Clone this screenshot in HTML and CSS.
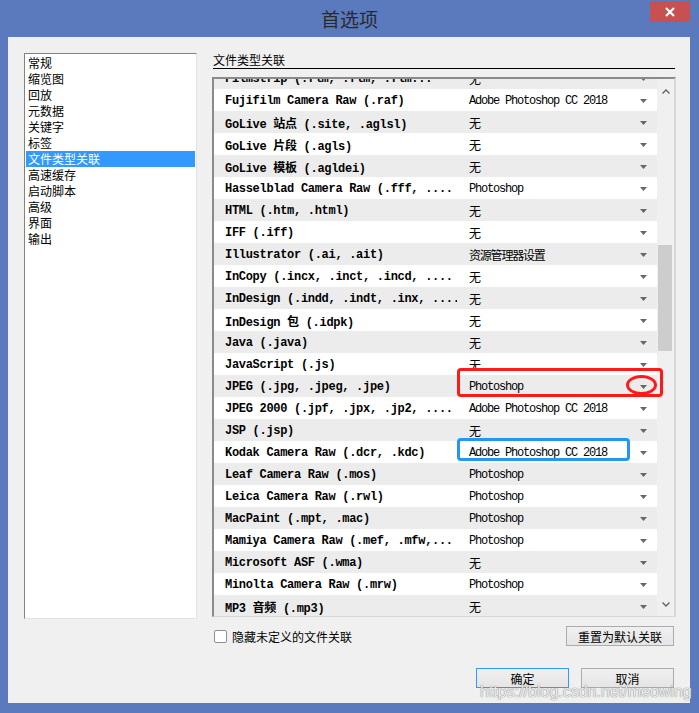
FILE: index.html
```html
<!DOCTYPE html>
<html lang="zh-CN">

<head>
    <meta charset="UTF-8">
    <meta name="viewport" content="width=device-width, initial-scale=1.0">
    <title>首选项</title>
    <link rel="stylesheet" href="styles.css">
</head>

<body>
    <div class="window">
        <div class="titlebar">
            <span class="title">首选项</span>
            <button class="close-btn" aria-label="关闭">
                <svg width="10" height="10" viewBox="0 0 10 10">
                    <path d="M1 1 L9 9 M9 1 L1 9" stroke="#fff" stroke-width="2.2" />
                </svg>
            </button>
        </div>

        <div class="client">
            <div class="main">
                <ul class="nav-list">
                    <li>常规</li>
                    <li>缩览图</li>
                    <li>回放</li>
                    <li>元数据</li>
                    <li>关键字</li>
                    <li>标签</li>
                    <li class="selected">文件类型关联</li>
                    <li>高速缓存</li>
                    <li>启动脚本</li>
                    <li>高级</li>
                    <li>界面</li>
                    <li>输出</li>
                </ul>

                <div class="panel">
                    <div class="panel-header">文件类型关联</div>

                    <div class="assoc-table">
                        <div class="rows">
                            <div class="row alt partial"><span class="name">Filmstrip (.flm, .flm, .flm...</span><span class="value"><span>无</span><svg class="arrow" viewBox="0 0 7 4"><path d="M0 0 H7 L3.5 4 Z" /></svg></span></div>
                            <div class="row"><span class="name">Fujifilm Camera Raw (.raf)</span><span class="value"><span>Adobe Photoshop CC 2018</span><svg class="arrow" viewBox="0 0 7 4"><path d="M0 0 H7 L3.5 4 Z" /></svg></span></div>
                            <div class="row alt"><span class="name">GoLive 站点 (.site, .aglsl)</span><span class="value"><span>无</span><svg class="arrow" viewBox="0 0 7 4"><path d="M0 0 H7 L3.5 4 Z" /></svg></span></div>
                            <div class="row"><span class="name">GoLive 片段 (.agls)</span><span class="value"><span>无</span><svg class="arrow" viewBox="0 0 7 4"><path d="M0 0 H7 L3.5 4 Z" /></svg></span></div>
                            <div class="row alt"><span class="name">GoLive 模板 (.agldei)</span><span class="value"><span>无</span><svg class="arrow" viewBox="0 0 7 4"><path d="M0 0 H7 L3.5 4 Z" /></svg></span></div>
                            <div class="row"><span class="name">Hasselblad Camera Raw (.fff, ....</span><span class="value"><span>Photoshop</span><svg class="arrow" viewBox="0 0 7 4"><path d="M0 0 H7 L3.5 4 Z" /></svg></span></div>
                            <div class="row alt"><span class="name">HTML (.htm, .html)</span><span class="value"><span>无</span><svg class="arrow" viewBox="0 0 7 4"><path d="M0 0 H7 L3.5 4 Z" /></svg></span></div>
                            <div class="row"><span class="name">IFF (.iff)</span><span class="value"><span>无</span><svg class="arrow" viewBox="0 0 7 4"><path d="M0 0 H7 L3.5 4 Z" /></svg></span></div>
                            <div class="row alt"><span class="name">Illustrator (.ai, .ait)</span><span class="value"><span>资源管理器设置</span><svg class="arrow" viewBox="0 0 7 4"><path d="M0 0 H7 L3.5 4 Z" /></svg></span></div>
                            <div class="row"><span class="name">InCopy (.incx, .inct, .incd, ....</span><span class="value"><span>无</span><svg class="arrow" viewBox="0 0 7 4"><path d="M0 0 H7 L3.5 4 Z" /></svg></span></div>
                            <div class="row alt"><span class="name">InDesign (.indd, .indt, .inx, ....</span><span class="value"><span>无</span><svg class="arrow" viewBox="0 0 7 4"><path d="M0 0 H7 L3.5 4 Z" /></svg></span></div>
                            <div class="row"><span class="name">InDesign 包 (.idpk)</span><span class="value"><span>无</span><svg class="arrow" viewBox="0 0 7 4"><path d="M0 0 H7 L3.5 4 Z" /></svg></span></div>
                            <div class="row alt"><span class="name">Java (.java)</span><span class="value"><span>无</span><svg class="arrow" viewBox="0 0 7 4"><path d="M0 0 H7 L3.5 4 Z" /></svg></span></div>
                            <div class="row"><span class="name">JavaScript (.js)</span><span class="value"><span>无</span><svg class="arrow" viewBox="0 0 7 4"><path d="M0 0 H7 L3.5 4 Z" /></svg></span></div>
                            <div class="row alt"><span class="name">JPEG (.jpg, .jpeg, .jpe)</span><span class="value"><span>Photoshop</span><svg class="arrow" viewBox="0 0 7 4"><path d="M0 0 H7 L3.5 4 Z" /></svg></span></div>
                            <div class="row"><span class="name">JPEG 2000 (.jpf, .jpx, .jp2, ....</span><span class="value"><span>Adobe Photoshop CC 2018</span><svg class="arrow" viewBox="0 0 7 4"><path d="M0 0 H7 L3.5 4 Z" /></svg></span></div>
                            <div class="row alt"><span class="name">JSP (.jsp)</span><span class="value"><span>无</span><svg class="arrow" viewBox="0 0 7 4"><path d="M0 0 H7 L3.5 4 Z" /></svg></span></div>
                            <div class="row"><span class="name">Kodak Camera Raw (.dcr, .kdc)</span><span class="value"><span>Adobe Photoshop CC 2018</span><svg class="arrow" viewBox="0 0 7 4"><path d="M0 0 H7 L3.5 4 Z" /></svg></span></div>
                            <div class="row alt"><span class="name">Leaf Camera Raw (.mos)</span><span class="value"><span>Photoshop</span><svg class="arrow" viewBox="0 0 7 4"><path d="M0 0 H7 L3.5 4 Z" /></svg></span></div>
                            <div class="row"><span class="name">Leica Camera Raw (.rwl)</span><span class="value"><span>Photoshop</span><svg class="arrow" viewBox="0 0 7 4"><path d="M0 0 H7 L3.5 4 Z" /></svg></span></div>
                            <div class="row alt"><span class="name">MacPaint (.mpt, .mac)</span><span class="value"><span>Photoshop</span><svg class="arrow" viewBox="0 0 7 4"><path d="M0 0 H7 L3.5 4 Z" /></svg></span></div>
                            <div class="row"><span class="name">Mamiya Camera Raw (.mef, .mfw,...</span><span class="value"><span>Photoshop</span><svg class="arrow" viewBox="0 0 7 4"><path d="M0 0 H7 L3.5 4 Z" /></svg></span></div>
                            <div class="row alt"><span class="name">Microsoft ASF (.wma)</span><span class="value"><span>无</span><svg class="arrow" viewBox="0 0 7 4"><path d="M0 0 H7 L3.5 4 Z" /></svg></span></div>
                            <div class="row"><span class="name">Minolta Camera Raw (.mrw)</span><span class="value"><span>Photoshop</span><svg class="arrow" viewBox="0 0 7 4"><path d="M0 0 H7 L3.5 4 Z" /></svg></span></div>
                            <div class="row alt"><span class="name">MP3 音频 (.mp3)</span><span class="value"><span>无</span><svg class="arrow" viewBox="0 0 7 4"><path d="M0 0 H7 L3.5 4 Z" /></svg></span></div>
                        </div>

                        <div class="scrollbar">
                            <div class="scroll-btn">
                                <svg width="8" height="5" viewBox="0 0 8 5"><path d="M0.5 4.5 L4 1 L7.5 4.5" fill="none" stroke="#606060" stroke-width="1.3" /></svg>
                            </div>
                            <div class="scroll-track">
                                <div class="scroll-thumb"></div>
                            </div>
                            <div class="scroll-btn">
                                <svg width="8" height="5" viewBox="0 0 8 5"><path d="M0.5 0.5 L4 4 L7.5 0.5" fill="none" stroke="#606060" stroke-width="1.3" /></svg>
                            </div>
                        </div>

                        <!-- annotations drawn on the screenshot -->
                        <div class="mark mark-red"></div>
                        <div class="mark mark-circle"></div>
                        <div class="mark mark-blue"></div>
                    </div>

                    <div class="options">
                        <label class="check"><span class="check-box"></span>隐藏未定义的文件关联</label>
                        <button class="btn btn-reset">重置为默认关联</button>
                    </div>
                </div>
            </div>

            <div class="footer">
                <button class="btn btn-default">确定</button>
                <button class="btn">取消</button>
            </div>
        </div>

        <div class="watermark">https://blog.csdn.net/meowing</div>
    </div>
</body>

</html>
```

FILE: styles.css
```css
body {
    margin: 0;
    padding: 0;
    font-family: "Noto Sans CJK SC", sans-serif;
    font-size: 12px;
    color: #000;
}

.window {
    position: relative;
    width: 699px;
    height: 713px;
    background-color: #5a7abd;
    display: flex;
    flex-direction: column;
}

.titlebar {
    height: 37px;
    display: grid;
    grid-template-columns: 1fr auto 1fr;
}

.title {
    grid-column: 2;
    line-height: 37px;
    font-size: 19px;
    color: #2a2a2a;
}

.close-btn {
    grid-column: 3;
    justify-self: end;
    align-self: start;
    width: 40px;
    height: 21px;
    margin: 1px 9px 0 0;
    padding: 0;
    border: none;
    background-color: #c75050;
    display: flex;
    align-items: center;
    justify-content: center;
}

.client {
    flex: 1;
    margin: 0 9px 10px 8px;
    background-color: #f0f0f0;
    padding: 15px 14px 15px 16px;
    display: flex;
    flex-direction: column;
}

.main {
    display: grid;
    grid-template-columns: 173px 1fr;
    gap: 15px;
}

.nav-list {
    list-style: none;
    margin: 1px 0 0;
    padding: 1px;
    height: 566px;
    box-sizing: border-box;
    background: #fff;
    border: 1px solid;
    border-color: #828282 #e3e3e3 #e3e3e3 #828282;
}

.nav-list li {
    height: 16px;
    line-height: 16px;
    padding-left: 2px;
}

.nav-list li.selected {
    background-color: #3399ff;
    color: #fff;
}

.panel-header {
    line-height: 16px;
    border-bottom: 1px solid #000;
    margin: 0 1px 8px 1px;
}

.assoc-table {
    position: relative;
    height: 540px;
    box-sizing: border-box;
    border-style: solid;
    border-width: 2px 2px 1px 2px;
    border-color: #8a8a8a #d8d8d8 #d8d8d8 #8a8a8a;
    display: flex;
    background: #f0f0f0;
}

.rows {
    width: 443px;
    overflow: hidden;
}

.row {
    display: flex;
    align-items: center;
    height: 22px;
    background: #fff;
}

.row.alt {
    background: #ececec;
}

.row.partial {
    margin-top: -12px;
}

.name {
    width: 243px;
    box-sizing: border-box;
    padding: 1px 0 0 11px;
    white-space: nowrap;
    overflow: hidden;
    font-family: "Liberation Mono", "Noto Sans CJK SC", monospace;
    font-weight: bold;
    font-size: 12px;
    letter-spacing: -0.3px;
}

.value {
    flex: 1;
    display: flex;
    align-items: center;
    justify-content: space-between;
    padding: 1px 10px 0 12px;
    font-family: "Liberation Mono", "Noto Sans CJK SC", monospace;
    font-size: 12px;
    letter-spacing: -1.2px;
    white-space: nowrap;
}

.arrow {
    width: 7px;
    height: 4px;
    fill: #676767;
}

.scrollbar {
    width: 17px;
    display: flex;
    flex-direction: column;
}

.scroll-btn {
    height: 24px;
    display: flex;
    align-items: center;
    justify-content: center;
}

.scroll-track {
    flex: 1;
}

.scroll-thumb {
    width: 14px;
    height: 106px;
    margin: 142px 0 0 1px;
    background: #cdcdcd;
}

.mark {
    position: absolute;
    box-sizing: border-box;
    border: 3px solid;
    border-radius: 4px;
}

.mark-red {
    left: 243px;
    top: 289px;
    width: 206px;
    height: 29px;
    border-color: #ff1a1a;
}

.mark-circle {
    left: 412px;
    top: 296px;
    width: 31px;
    height: 20px;
    border-color: #ff1a1a;
    border-radius: 50%;
}

.mark-blue {
    left: 243px;
    top: 359px;
    width: 173px;
    height: 23px;
    border-color: #2196f3;
}

.options {
    margin-top: 9px;
    height: 20px;
    padding: 0 2px;
    display: flex;
    align-items: center;
    justify-content: space-between;
}

.check {
    display: flex;
    align-items: center;
    gap: 5px;
}

.check-box {
    width: 13px;
    height: 13px;
    box-sizing: border-box;
    border: 1px solid #8f8f8f;
    border-radius: 2px;
    background: #fff;
}

.btn {
    height: 20px;
    padding: 0;
    font-family: "Noto Sans CJK SC", sans-serif;
    font-size: 12px;
    color: #000;
    background: linear-gradient(#f0f0f0, #e5e5e5);
    border: 1px solid #acacac;
}

.btn-reset {
    width: 108px;
}

.footer {
    margin-top: 22px;
    padding-right: 2px;
    display: flex;
    justify-content: flex-end;
    gap: 12px;
}

.footer .btn {
    width: 93px;
}

.btn-default {
    border-color: #3399ff;
}

.watermark {
    position: absolute;
    left: 480px;
    top: 683px;
    font-family: "Liberation Sans", sans-serif;
    font-size: 16px;
    color: rgba(255, 255, 255, 0.85);
    text-shadow: 0 0 1px #8a8a8a, 0 0 1px #8a8a8a;
}
```
